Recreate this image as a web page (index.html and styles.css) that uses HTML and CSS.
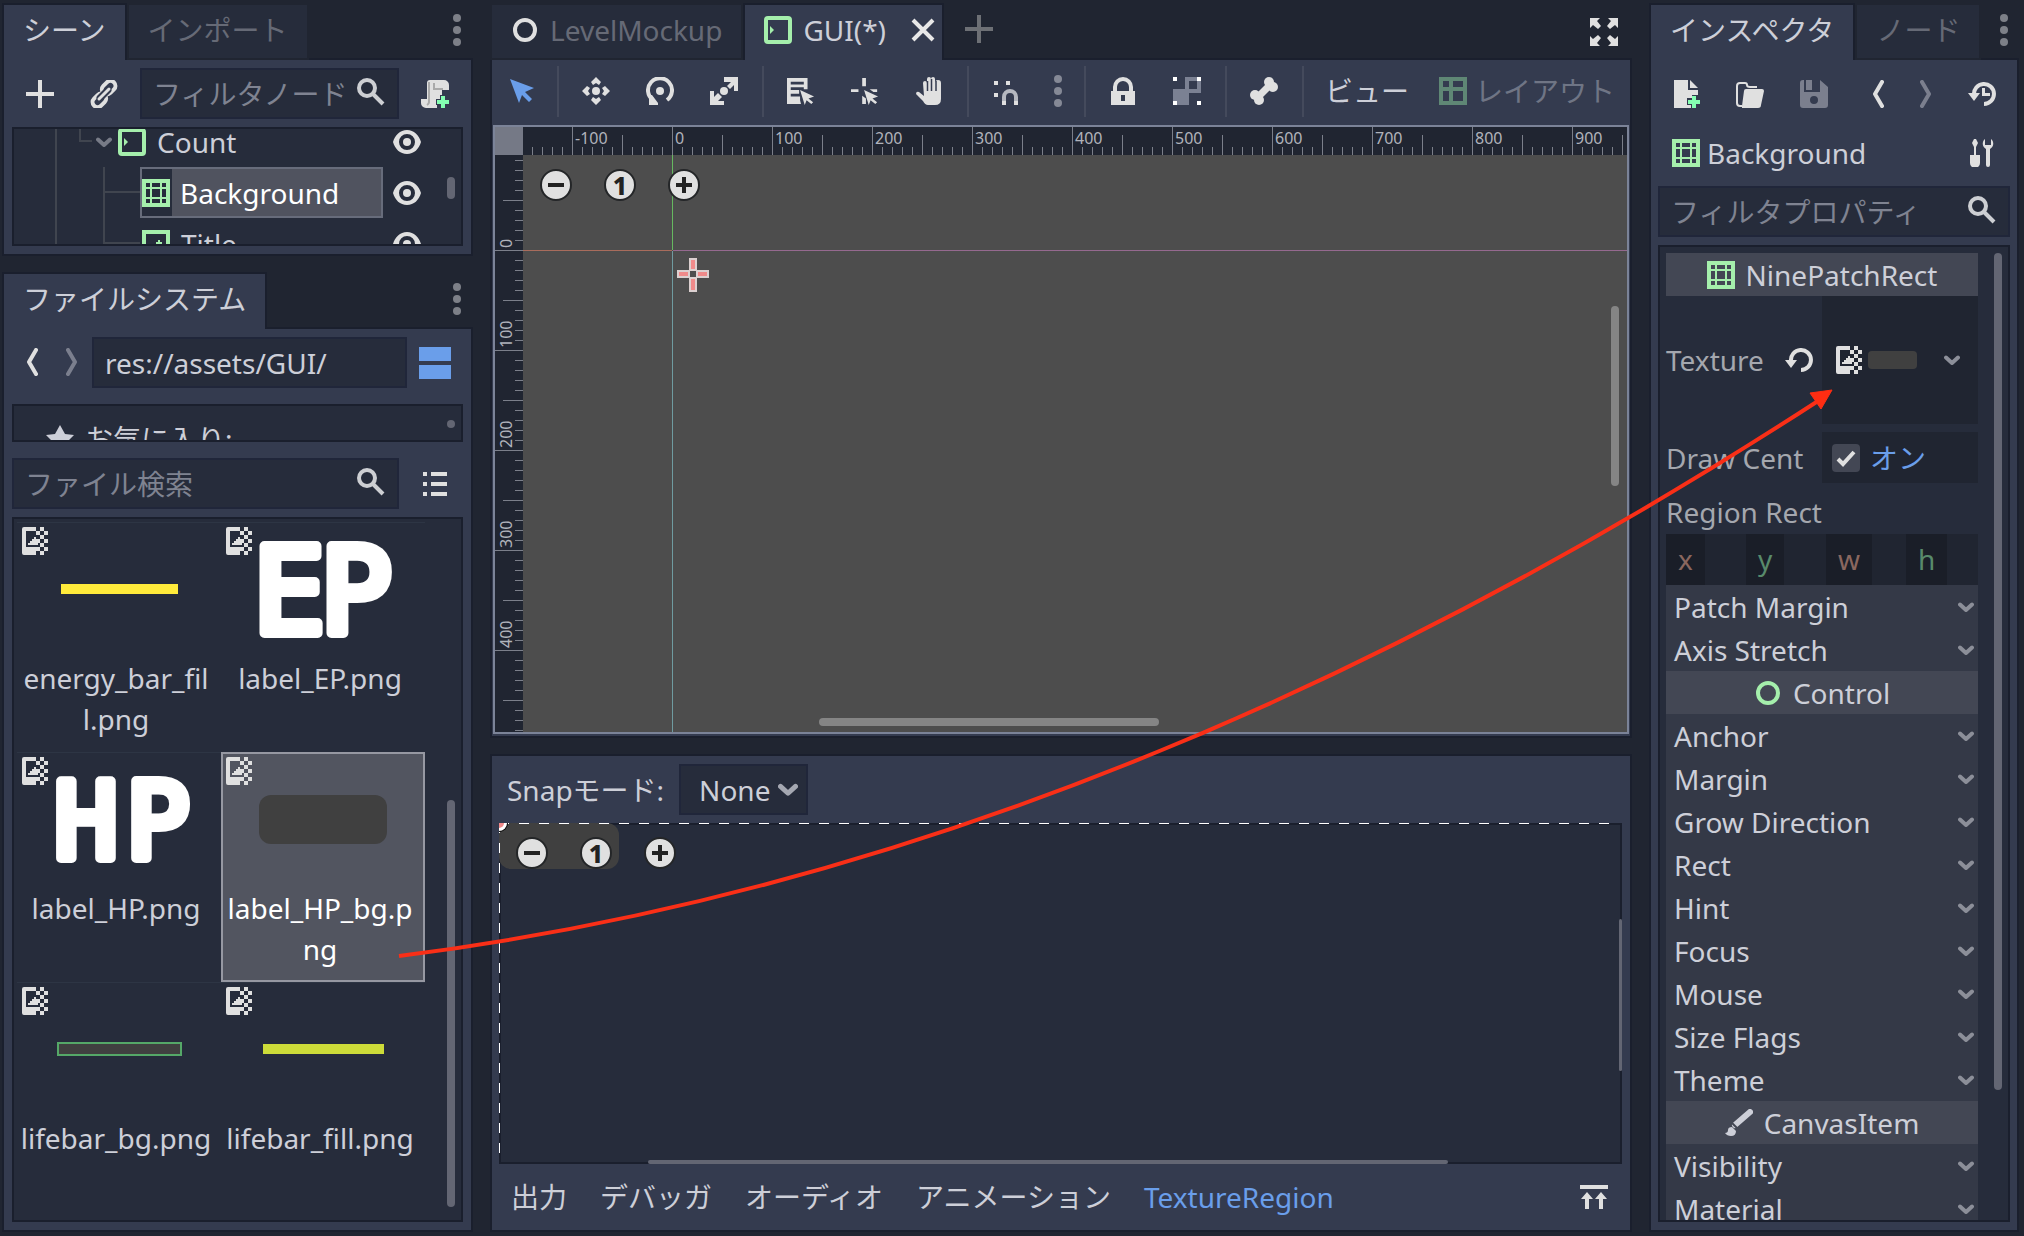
FILE: index.html
```html
<!DOCTYPE html>
<html lang="ja">
<head>
<meta charset="utf-8">
<title>GUI(*)</title>
<link rel="stylesheet" href="styles.css">
</head>
<body>
<svg class="defs" aria-hidden="true">
  <symbol id="i-dots" viewBox="0 0 8 32"><circle cx="4" cy="4" r="4"/><circle cx="4" cy="16" r="4"/><circle cx="4" cy="28" r="4"/></symbol>
  <symbol id="i-plus" viewBox="0 0 14 14"><path d="M6 0h2v6h6v2H8v6H6V8H0V6h6z"/></symbol>
  <symbol id="i-link" viewBox="0 0 28 28"><g fill="none" stroke="currentColor" stroke-width="4"><rect x="11.500" y="2.500" width="15" height="10" rx="5" transform="rotate(-45 19 8)"/><rect x="1.500" y="15.500" width="15" height="10" rx="5" transform="rotate(-45 9 20)"/></g><path d="M10 18 18 10" stroke="#343b4f" stroke-width="7" stroke-linecap="round"/><path d="M9 19 19 9" stroke="currentColor" stroke-width="3" stroke-linecap="round"/></symbol>
  <symbol id="i-search" viewBox="0 0 28 28"><circle cx="10" cy="10" r="8" fill="none" stroke="currentColor" stroke-width="4"/><path d="M16 16 26 26" stroke="currentColor" stroke-width="4"/></symbol>
  <symbol id="i-script" viewBox="0 0 28 28"><path d="M9 0h14a5 5 0 0 1 5 5v5h-7v9h-3v5h-2v4H5a5 5 0 0 1-5-5v-4h6V3a3 3 0 0 1 3-3z"/><path d="M13 3v6h9M8 2v19a4 4 0 0 1-2 4" fill="none" stroke="#aaa" stroke-width="2"/><path d="M19 15h6v4h4v6h-4v4h-6v-4h-4v-6h4z" fill="#343b4f"/><path d="M20 16h4v4h4v4h-4v4h-4v-4h-4v-4h4z" fill="#84ffb1"/></symbol>
  <symbol id="i-eye" viewBox="0 0 28 24"><path fill-rule="evenodd" d="M14 0C7 0 2 5 0 12c2 7 7 12 14 12s12-5 14-12C26 5 21 0 14 0zm0 4a8 8 0 1 1 0 16 8 8 0 0 1 0-16z"/><circle cx="14" cy="12" r="4"/></symbol>
  <symbol id="i-chev" viewBox="0 0 16 10"><path d="M2 2.500 8 8l6-5.500" fill="none" stroke="currentColor" stroke-width="4" stroke-linecap="round" stroke-linejoin="round"/></symbol>
  <symbol id="i-box" viewBox="0 0 28 28"><rect x="2" y="2" width="24" height="24" rx="2" fill="none" stroke="currentColor" stroke-width="4"/><path d="M6 10l4 4-4 4z"/></symbol>
  <symbol id="i-nine" viewBox="0 0 14 14"><path fill-rule="evenodd" d="M0 0h14v14H0zM2 2v2h2V2zM5 2v2h4V2zM10 2v2h2V2zM2 5v4h2V5zM5 5v4h4V5zM10 5v4h2V5zM2 10v2h2v-2zM5 10v2h4v-2zM10 10v2h2v-2z"/></symbol>
  <symbol id="i-texrect" viewBox="0 0 14 14"><path fill-rule="evenodd" d="M0 0h14v14H0zM2 2v10h10V2z"/><path d="M3 10V9h1V8h2V7h1V6h1V5h1v1h1v4z"/></symbol>
  <symbol id="i-img" viewBox="0 0 13 14"><path d="M1 0h6v2H2v8h5v4H1a1 1 0 0 1-1-1V1a1 1 0 0 1 1-1z"/><path d="M3 9V8h1V7h1V6h1V5h1v1h1v3z"/><path d="M9 0h2v2H9zM7 2h2v2H7zM11 2h2v2h-2zM9 4h2v2H9zM11 6h2v2h-2zM9 8h2v2H9zM7 6h2v2H7zM11 10h2v2h-2zM7 10h2v2H7zM9 12h2v2H9z"/></symbol>
  <symbol id="i-prev" viewBox="0 0 12 28"><path d="M10 2 3 14l7 12" fill="none" stroke="currentColor" stroke-width="4" stroke-linecap="round" stroke-linejoin="round"/></symbol>
  <symbol id="i-next" viewBox="0 0 12 28"><path d="M2 2l7 12-7 12" fill="none" stroke="currentColor" stroke-width="4" stroke-linecap="round" stroke-linejoin="round"/></symbol>
  <symbol id="i-split" viewBox="0 0 32 32"><path d="M0 0h32v14H0zM0 18h32v14H0z"/></symbol>
  <symbol id="i-star" viewBox="0 0 28 28"><path d="M14 0l5 9 9 1-7 7 3 10-10-5-10 5 3-10-7-7 9-1z"/></symbol>
  <symbol id="i-list" viewBox="0 0 24 24"><path d="M0 0h4v4H0zM8 0h16v4H8zM0 10h4v4H0zM8 10h16v4H8zM0 20h4v4H0zM8 20h16v4H8z"/></symbol>
  <symbol id="i-ring" viewBox="0 0 28 28"><circle cx="14" cy="14" r="10" fill="none" stroke="currentColor" stroke-width="4"/></symbol>
  <symbol id="i-ring-l" viewBox="0 0 28 28"><circle cx="14" cy="14" r="10" fill="none" stroke="currentColor" stroke-width="4"/></symbol>
  <symbol id="i-close" viewBox="0 0 24 24"><path d="M2 2 22 22M22 2 2 22" stroke="currentColor" stroke-width="4"/></symbol>
  <symbol id="i-full" viewBox="0 0 28 28"><path d="M0 0h10L7 3l4 5-3 3-5-4-3 3zM28 0H18l3 3-4 5 3 3 5-4 3 3zM0 28h10l-3-3 4-5-3-3-5 4-3-3zM28 28H18l3-3-4-5 3-3 5 4 3-3z"/></symbol>
  <symbol id="i-select" viewBox="0 0 28 28"><path d="M2 2l24 9-9 4 7 7-3 3-7-7-3 8z"/></symbol>
  <symbol id="i-move" viewBox="0 0 28 28"><circle cx="14" cy="14" r="4"/><path d="M14 0l5 5-2 3-3-2-3 2-2-3zM14 28l5-5-2-3-3 2-3-2-2 3zM0 14l5-5 3 2-2 3 2 3-3 2zM28 14l-5-5-3 2 2 3-2 3 3 2z"/></symbol>
  <symbol id="i-rotate" viewBox="0 0 28 28"><circle cx="14" cy="14" r="4"/><path d="M7 23A12 12 0 1 1 21 23" fill="none" stroke="currentColor" stroke-width="4"/><path d="M3 28V18h3l6 8v2z"/></symbol>
  <symbol id="i-scale" viewBox="0 0 28 28"><circle cx="14" cy="14" r="4"/><path d="M14 0h14v14h-4V8l-4 4-3-3 4-4h-7zM0 14h4v6l4-4 4 4-4 4h6v4H0z"/></symbol>
  <symbol id="i-lsel" viewBox="0 0 30 28"><path d="M0 0h22v12h-4v-2H4v3h9v4H4v3h10v4l1 4H0zM4 4v3h14V4z" fill-rule="evenodd"/><path d="M14 13l15 7-6 2 5 4-2 2-5-4-2 5z"/></symbol>
  <symbol id="i-pivot" viewBox="0 0 30 28"><path d="M12 0h4v9h-4zM0 12h8v3H0zM20 12h8v3h-4zM12 19l4 3v6h-4z"/><path d="M14 13l15 7-6 2 5 4-2 2-5-4-2 5z"/></symbol>
  <symbol id="i-hand" viewBox="0 0 26 28"><path d="M7 6a2 2 0 0 1 4 0V2a2 2 0 0 1 4 0v0a2 2 0 0 1 4 0v4a2 2 0 0 1 6 0v16q0 6-6 6h-7q-3 0-5-4L0 17q0-3 3-2l5 4z"/><path d="M11.500 4v10M15.500 2v12M20 4v10" stroke="#343b4f" stroke-width="1.500"/></symbol>
  <symbol id="i-snap" viewBox="0 0 28 28"><path d="M2 4h4v4H2zM14 4h4v4h-4zM2 16h4v4H2z"/><path d="M12 24v-4a6 6 0 0 1 12 0v4" fill="none" stroke="#b5b8c0" stroke-width="4"/><path d="M10 24h4v4h-4zM22 24h4v4h-4z"/></symbol>
  <symbol id="i-lock" viewBox="0 0 24 28"><path fill-rule="evenodd" d="M0 14h2V10a10 10 0 0 1 20 0v4h2v14H0zM6 14h12V10a6 6 0 0 0-12 0zM10 18v6h4v-6z"/></symbol>
  <symbol id="i-group" viewBox="0 0 28 28"><path d="M0 12h12V0h16v16H16v12H0zM16 4v8h8V4z" fill="#7b8193" fill-rule="evenodd"/><path d="M0 0h4v4H0zM24 0h4v4h-4zM0 24h4v4H0zM24 24h4v4h-4z" fill="#fff"/></symbol>
  <symbol id="i-bone" viewBox="0 0 28 28"><path d="M8 20 20 8" stroke="currentColor" stroke-width="7"/><circle cx="19" cy="5" r="5"/><circle cx="23" cy="10" r="5"/><circle cx="5" cy="18" r="5"/><circle cx="9" cy="23" r="5"/></symbol>
  <symbol id="i-layout" viewBox="0 0 28 28"><path fill-rule="evenodd" d="M0 0h28v28H0zM4 4v6h6V4zM14 4v6h10V4zM4 14v10h6V14zM14 14v10h10V14z"/></symbol>
  <symbol id="i-minus-c" viewBox="0 0 32 32"><circle cx="16" cy="16" r="15" fill="#e0e0e0" stroke="#242628" stroke-width="2"/><path d="M8 14h16v4H8z" fill="#222"/></symbol>
  <symbol id="i-plus-c" viewBox="0 0 32 32"><circle cx="16" cy="16" r="15" fill="#e0e0e0" stroke="#242628" stroke-width="2"/><path d="M8 14h6V8h4v6h6v4h-6v6h-4v-6H8z" fill="#222"/></symbol>
  <symbol id="i-up" viewBox="0 0 28 24"><path d="M0 0h28v4H0zM7 7l6 7H9v10H5V14H1zM21 7l6 7h-4v10h-4V14h-4z"/></symbol>
  <symbol id="i-new" viewBox="0 0 28 28"><path d="M2 0h14v10h10v5h-6v3h-5v7h4v3H2zM18 0l8 8h-8z"/><path d="M20 16h4v4h4v4h-4v4h-4v-4h-4v-4h4z" fill="#84ffb1"/></symbol>
  <symbol id="i-open" viewBox="0 0 28 28"><path d="M6 26H4a3 3 0 0 1-3-3V6q0-3 3-3h5q2 0 2 2t3 2h7" fill="none" stroke="currentColor" stroke-width="2"/><path d="M10 9h16q2 0 2 2l-3 14q0 3-3 3H6q0 0 0-2l2-15q0-2 2-2z"/></symbol>
  <symbol id="i-save" viewBox="0 0 28 28"><path fill-rule="evenodd" d="M3 0h1v12h16V0l8 7v18a3 3 0 0 1-3 3H3a3 3 0 0 1-3-3V3a3 3 0 0 1 3-3zm11 16a4 4 0 1 0 0 8 4 4 0 0 0 0-8z"/><path d="M6 0h6v10H6z"/></symbol>
  <symbol id="i-hist" viewBox="0 0 28 28"><path d="M6 15A10 10 0 1 1 16 24" fill="none" stroke="currentColor" stroke-width="4"/><path d="M0 13h12l-6 8zM14 8h3v5h5v3h-8z"/></symbol>
  <symbol id="i-tools" viewBox="0 0 24 28"><path d="M4 0h2l2 4-2 4v8h4v8a5 5 0 0 1-10 0v-8h4V8L2 4z"/><path d="M15 0v6h6V0a6 6 0 0 1-1 10v16a2 2 0 0 1-4 0V10a6 6 0 0 1-1-10z"/></symbol>
  <symbol id="i-reload" viewBox="0 0 28 24"><path d="M6 13A10 10 0 1 1 16 22" fill="none" stroke="currentColor" stroke-width="4"/><path d="M0 12h12l-6 8z"/></symbol>
  <symbol id="i-brush" viewBox="0 0 28 28"><path d="M10 16 25 3" stroke="currentColor" stroke-width="6" stroke-linecap="round"/><path d="M0 24q3 0 3-3t4-3l4 4q0 5-5 5-4 0-6-3z"/><path d="M7 14l6 6" stroke="#434754" stroke-width="2"/></symbol>
</svg>

<div class="editor">
  <div class="side">
    <section class="dock scene">
      <div class="tabs"><button class="tab on">シーン</button><button class="tab">インポート</button><span class="fill"></span><button class="dots" aria-label="メニュー"><svg><use href="#i-dots"/></svg></button></div>
      <div class="body">
        <div class="row tools">
          <button class="ic" aria-label="追加"><svg class="s28"><use href="#i-plus"/></svg></button>
          <button class="ic wide" aria-label="リンク"><svg class="s28"><use href="#i-link"/></svg></button>
          <label class="field"><input placeholder="フィルタノード" aria-label="フィルタノード"><svg class="s28"><use href="#i-search"/></svg></label>
          <button class="ic script" aria-label="スクリプト"><svg class="s28"><use href="#i-script"/></svg></button>
        </div>
        <div class="well treewell">
          <ul class="tree">
            <li><svg class="guide g1"><path d="M42 0v51M66 0v25h12"/></svg><svg class="chev"><use href="#i-chev"/></svg><span class="node n1"><svg class="s28 green"><use href="#i-box"/></svg><span>Count</span></span><svg class="eye"><use href="#i-eye"/></svg></li>
            <li><svg class="guide g2"><path d="M42 0v51M90 0v51M90 25h36"/></svg><span class="node sel"><span class="cell"><svg class="s28 green"><use href="#i-nine"/></svg></span><span>Background</span></span><svg class="eye"><use href="#i-eye"/></svg></li>
            <li><svg class="guide g2"><path d="M42 0v51M90 0v51M90 25h36"/></svg><span class="node n3"><svg class="s28 green"><use href="#i-texrect"/></svg><span>Title</span></span><svg class="eye"><use href="#i-eye"/></svg></li>
          </ul>
          <span class="bar bar-tree"></span>
        </div>
      </div>
    </section>

    <section class="dock files">
      <div class="tabs"><button class="tab on">ファイルシステム</button><span class="fill"></span><button class="dots" aria-label="メニュー"><svg><use href="#i-dots"/></svg></button></div>
      <div class="body">
        <div class="row path">
          <button class="ar" aria-label="戻る"><svg class="arrow"><use href="#i-prev"/></svg></button>
          <button class="ar dim" aria-label="進む"><svg class="arrow"><use href="#i-next"/></svg></button>
          <input class="field" value="res://assets/GUI/" aria-label="パス">
          <button class="ic blue" aria-label="分割"><svg class="s32"><use href="#i-split"/></svg></button>
        </div>
        <div class="well fav"><svg class="s28"><use href="#i-star"/></svg><span>お気に入り:</span><span class="bar bar-fav"></span></div>
        <div class="row find">
          <label class="field"><input placeholder="ファイル検索" aria-label="ファイル検索"><svg class="s28"><use href="#i-search"/></svg></label>
          <button class="ic" aria-label="リスト"><svg class="s24"><use href="#i-list"/></svg></button>
        </div>
        <div class="well grid">
          <figure><svg class="badge"><use href="#i-img"/></svg><div class="thumb"><i class="t-energy"></i></div><figcaption>energy_bar_fil<br>l.png</figcaption></figure>
          <figure><svg class="badge"><use href="#i-img"/></svg><div class="thumb"><svg class="word ep"><text x="-6 61" y="93">EP</text></svg></div><figcaption>label_EP.png</figcaption></figure>
          <figure><svg class="badge"><use href="#i-img"/></svg><div class="thumb"><svg class="word hp"><text x="-1 71" y="82">HP</text></svg></div><figcaption>label_HP.png</figcaption></figure>
          <figure class="sel"><svg class="badge"><use href="#i-img"/></svg><div class="thumb"><i class="t-bg"></i></div><figcaption>label_HP_bg.p<br>ng</figcaption></figure>
          <figure><svg class="badge"><use href="#i-img"/></svg><div class="thumb"><i class="t-life"></i></div><figcaption>lifebar_bg.png</figcaption></figure>
          <figure><svg class="badge"><use href="#i-img"/></svg><div class="thumb"><i class="t-fill"></i></div><figcaption>lifebar_fill.png</figcaption></figure>
          <span class="bar bar-grid"></span>
        </div>
      </div>
    </section>
  </div>

  <main class="center">
    <section class="dock stage">
      <div class="tabs">
        <button class="tab doc"><svg class="s28 white"><use href="#i-ring"/></svg>LevelMockup</button>
        <button class="tab doc on"><svg class="s28 green"><use href="#i-box"/></svg>GUI(*)<svg class="s24 close"><use href="#i-close"/></svg></button>
        <button class="addtab" aria-label="追加"><svg class="s28"><use href="#i-plus"/></svg></button>
        <span class="fill"></span>
        <button class="full" aria-label="全画面"><svg class="s28"><use href="#i-full"/></svg></button>
      </div>
      <div class="body">
        <div class="toolbar">
          <button class="first blue" aria-label="選択"><svg class="s28"><use href="#i-select"/></svg></button><hr>
          <button aria-label="移動"><svg class="s28"><use href="#i-move"/></svg></button>
          <button aria-label="回転"><svg class="s28"><use href="#i-rotate"/></svg></button>
          <button aria-label="拡縮"><svg class="s28"><use href="#i-scale"/></svg></button><hr>
          <button aria-label="リスト選択"><svg class="s28"><use href="#i-lsel"/></svg></button>
          <button aria-label="ピボット"><svg class="s28"><use href="#i-pivot"/></svg></button>
          <button aria-label="パン"><svg class="s28"><use href="#i-hand"/></svg></button><hr>
          <button aria-label="スナップ"><svg class="s28"><use href="#i-snap"/></svg></button>
          <button class="more" aria-label="オプション"><svg><use href="#i-dots"/></svg></button><hr>
          <button aria-label="ロック"><svg class="s28"><use href="#i-lock"/></svg></button>
          <button aria-label="グループ"><svg class="s28"><use href="#i-group"/></svg></button><hr>
          <button aria-label="ボーン"><svg class="s28"><use href="#i-bone"/></svg></button><hr>
          <button class="view">ビュー</button>
          <button class="layout"><svg class="s28"><use href="#i-layout"/></svg>レイアウト</button>
        </div>
        <div class="viewport">
          <svg class="canvas">
            <defs>
              <pattern id="tx" x="177" y="0" width="100" height="28" patternUnits="userSpaceOnUse"><path d="M.5 0v28M50.500 8v20M10.500 20v8M20.500 20v8M30.500 20v8M40.500 20v8M60.500 20v8M70.500 20v8M80.500 20v8M90.500 20v8" stroke="#7b7f8a"/></pattern>
              <pattern id="ty" x="0" y="123" width="28" height="100" patternUnits="userSpaceOnUse"><path d="M0 .5h28M8 50.500h20M20 10.500h8M20 20.500h8M20 30.500h8M20 40.500h8M20 60.500h8M20 70.500h8M20 80.500h8M20 90.500h8" stroke="#7b7f8a"/></pattern>
            </defs>
            <rect width="100%" height="100%" fill="#4d4d4d"/>
            <path d="M177.500 28v95" stroke="#66b860"/>
            <rect x="177" y="124" width="1" height="100%" fill="#6f9ba0"/>
            <path d="M28 123.500h149" stroke="#a96c5c"/>
            <rect x="178" y="123" width="100%" height="1" fill="#95698f"/>
            <rect width="100%" height="28" fill="#202531"/><rect width="28" height="100%" fill="#202531"/>
            <rect x="28" width="100%" height="28" fill="url(#tx)"/><rect y="28" width="28" height="100%" fill="url(#ty)"/>
            <rect width="28" height="28" fill="#757986"/>
            <g class="num"><text x="80" y="17">-100</text><text x="180" y="17">0</text><text x="280" y="17">100</text><text x="380" y="17">200</text><text x="480" y="17">300</text><text x="580" y="17">400</text><text x="680" y="17">500</text><text x="780" y="17">600</text><text x="880" y="17">700</text><text x="980" y="17">800</text><text x="1080" y="17">900</text>
            <text transform="translate(17 121) rotate(-90)">0</text><text transform="translate(17 221) rotate(-90)">100</text><text transform="translate(17 321) rotate(-90)">200</text><text transform="translate(17 421) rotate(-90)">300</text><text transform="translate(17 521) rotate(-90)">400</text></g>
            <g fill="#f08a8a" stroke="#dcd0d0" stroke-width="2"><path d="M195 132h6v11h-6zM195 151h6v13h-6zM183 144h11v6h-11zM202 144h11v6h-11z"/></g>
          </svg>
          <div class="zoom zoom-main"><button aria-label="縮小"><svg><use href="#i-minus-c"/></svg></button><button class="one">1</button><button aria-label="拡大"><svg><use href="#i-plus-c"/></svg></button></div>
          <span class="bar bar-v"></span><span class="bar bar-h"></span>
        </div>
      </div>
    </section>

    <section class="dock bottom">
      <div class="snap"><label for="snap">Snapモード:</label><span class="pick"><select id="snap"><option>None</option></select><svg class="chev big"><use href="#i-chev"/></svg></span></div>
      <div class="well region">
        <svg class="dash"><rect width="120" height="46" rx="12" fill="#404040"/><path d="M0 .5H1112" stroke="#fff" stroke-dasharray="10 10"/><path d="M.5 0V340" stroke="#fff" stroke-dasharray="10 10"/><circle r="9" fill="#000"/><circle r="8" fill="#fff"/><circle r="5" fill="#f08a8a"/></svg>
        <div class="zoom zoom-sub"><button aria-label="縮小"><svg><use href="#i-minus-c"/></svg></button><button class="one">1</button><button aria-label="拡大"><svg><use href="#i-plus-c"/></svg></button></div>
        <span class="bar bar-rv"></span><span class="bar bar-rh"></span>
      </div>
      <nav class="panels"><button>出力</button><button>デバッガ</button><button>オーディオ</button><button>アニメーション</button><button class="blue">TextureRegion</button><span class="fill"></span><button aria-label="展開"><svg class="up"><use href="#i-up"/></svg></button></nav>
    </section>
  </main>

  <section class="dock inspector">
    <div class="tabs"><button class="tab on">インスペクタ</button><button class="tab">ノード</button><span class="fill"></span><button class="dots" aria-label="メニュー"><svg><use href="#i-dots"/></svg></button></div>
    <div class="body">
      <div class="row res">
        <button aria-label="新規"><svg class="s28"><use href="#i-new"/></svg></button>
        <button aria-label="開く"><svg class="s28"><use href="#i-open"/></svg></button>
        <button class="dim" aria-label="保存"><svg class="s28"><use href="#i-save"/></svg></button>
        <button class="prev" aria-label="前"><svg class="arrow"><use href="#i-prev"/></svg></button>
        <button class="dim" aria-label="次"><svg class="arrow"><use href="#i-next"/></svg></button>
        <button aria-label="履歴"><svg class="s28"><use href="#i-hist"/></svg></button>
      </div>
      <div class="row obj"><svg class="s28 green"><use href="#i-nine"/></svg><span>Background</span><span class="fill"></span><button aria-label="ツール"><svg class="toolic"><use href="#i-tools"/></svg></button></div>
      <label class="field prop"><input placeholder="フィルタプロパティ" aria-label="フィルタプロパティ"><svg class="s28"><use href="#i-search"/></svg></label>
      <div class="well props">
        <div class="list">
          <h2><svg class="s28 green"><use href="#i-nine"/></svg>NinePatchRect</h2>
          <div class="p texture"><span class="name">Texture</span><button class="reload" aria-label="リセット"><svg class="rel"><use href="#i-reload"/></svg></button><button class="val" aria-label="Texture"><svg class="badge"><use href="#i-img"/></svg><i class="swatch"></i><span class="fill"></span><svg class="chev"><use href="#i-chev"/></svg></button></div>
          <div class="p draw"><label class="name" for="dc">Draw Cent</label><span class="val"><span class="check"><input type="checkbox" id="dc" checked><svg viewBox="0 0 28 28"><path d="M6 15l5 5L22 8" fill="none" stroke="#e0e0e0" stroke-width="4"/></svg></span><span class="blue">オン</span></span></div>
          <div class="name rr">Region Rect</div>
          <div class="vec"><label><span class="r">x</span><input aria-label="x"></label><label><span class="g">y</span><input aria-label="y"></label><label><span class="r">w</span><input aria-label="w"></label><label><span class="g">h</span><input aria-label="h"></label></div>
          <button class="sec">Patch Margin<svg class="chev"><use href="#i-chev"/></svg></button>
          <button class="sec">Axis Stretch<svg class="chev"><use href="#i-chev"/></svg></button>
          <h2><svg class="s28 green"><use href="#i-ring-l"/></svg>Control</h2>
          <button class="sec">Anchor<svg class="chev"><use href="#i-chev"/></svg></button>
          <button class="sec">Margin<svg class="chev"><use href="#i-chev"/></svg></button>
          <button class="sec">Grow Direction<svg class="chev"><use href="#i-chev"/></svg></button>
          <button class="sec">Rect<svg class="chev"><use href="#i-chev"/></svg></button>
          <button class="sec">Hint<svg class="chev"><use href="#i-chev"/></svg></button>
          <button class="sec">Focus<svg class="chev"><use href="#i-chev"/></svg></button>
          <button class="sec">Mouse<svg class="chev"><use href="#i-chev"/></svg></button>
          <button class="sec">Size Flags<svg class="chev"><use href="#i-chev"/></svg></button>
          <button class="sec">Theme<svg class="chev"><use href="#i-chev"/></svg></button>
          <h2><svg class="s28"><use href="#i-brush"/></svg>CanvasItem</h2>
          <button class="sec">Visibility<svg class="chev"><use href="#i-chev"/></svg></button>
          <button class="sec">Material<svg class="chev"><use href="#i-chev"/></svg></button>
        </div>
        <span class="bar bar-props"></span>
      </div>
    </div>
  </section>
</div>
<svg class="arrow-note" aria-hidden="true"><path d="M399 956Q1100 868 1818 401" fill="none" stroke="#f92f17" stroke-width="4"/><path d="M1832 390l-22 3 11 16z" fill="#ff2d12" stroke="#ff2d12" stroke-width="1"/></svg>
</body>
</html>
```
FILE: styles.css
```css
* { box-sizing: border-box; }
body {
  margin: 0;
  position: relative;
  background: #202531;
  color: #cdcfd8;
  font: 28px/40px "Noto Sans", "Noto Sans CJK JP", sans-serif;
  overflow: hidden;
}
button, input, select { font: inherit; color: inherit; background: none; border: 0; padding: 0; margin: 0; outline: 0; }
button { display: flex; align-items: center; justify-content: center; color: #e0e0e0; }
svg { display: block; flex: none; fill: currentColor; }
ul, h2, figure { margin: 0; padding: 0; list-style: none; font-weight: 400; font-size: 28px; }
i { display: block; }
.defs { position: absolute; width: 0; height: 0; }
.fill { flex: 1; }
.s28 { width: 28px; height: 28px; }
.s24 { width: 24px; height: 24px; }
.s32 { width: 32px; height: 32px; }
.arrow { width: 12px; height: 28px; }
.chev { width: 16px; height: 10px; color: #8c8f99; }
.badge { width: 26px; height: 28px; color: #e0e0e0; }
.green { color: #a5efac; }
.white { color: #e0e0e0; }
.blue, button.blue { color: #6a9eea; }
button.dim { color: #7b7f8e; }

.editor {
  display: grid;
  grid-template-columns: 471px minmax(0, 1fr) 370px;
  gap: 17px;
  height: 100vh;
  padding: 3px 5px 4px 2px;
}
.side, .center { display: flex; flex-direction: column; gap: 16px; min-height: 0; }
.dock { display: flex; flex-direction: column; min-height: 0; }
.body {
  flex: 1;
  min-height: 0;
  display: flex;
  flex-direction: column;
  background: #343b4f;
  border: 2px solid #1a1f2d;
  border-top: 0;
  padding: 8px;
}
.tabs { display: flex; height: 57px; box-shadow: inset 0 -2px #1a1f2d; }
.tab {
  height: 57px;
  padding: 0 19px 4px;
  border: 2px solid #202531;
  background: #262c3b;
  color: #666a76;
}
.tab.on { background: #343b4f; border-color: #1a1f2d; border-bottom: 0; color: #cdcfd8; padding-bottom: 6px; }
.dots { width: 32px; color: #7d8088; padding-bottom: 3px; }
.dots svg, .more svg { width: 8px; height: 32px; }

.field {
  display: flex;
  align-items: center;
  height: 51px;
  background: #262c3b;
  border: 2px solid #20263a;
  padding: 0 12px 0 11px;
  min-width: 0;
  flex: 1;
}
.field input { flex: 1; width: 0; min-width: 0; }
.field svg { color: #cdcfd3; margin-bottom: 3px; }
input::placeholder { color: #7f8391; opacity: 1; }
.well { position: relative; background: #262c3b; border: 2px solid #1a1f2d; overflow: hidden; }
.row { display: flex; align-items: center; }
.bar { position: absolute; width: 8px; border-radius: 4px; background: #636673; }

.scene { height: 253px; }
.tools .ic { width: 56px; }
.tools .wide { width: 72px; }
.tools .script { width: 64px; padding-left: 8px; }
.treewell { flex: 1; margin-top: 8px; }
.tree { margin-top: -13px; }
.tree li { display: flex; align-items: center; height: 51px; }
.guide { height: 51px; fill: none; stroke: #40454f; stroke-width: 2; }
.g1 { width: 82px; }
.g2 { width: 126px; }
.node { display: flex; align-items: center; height: 51px; gap: 11px; width: 243px; }
.n1 { width: 271px; padding-left: 6px; }
.tree .chev { width: 16px; color: #777b87; }
.n3 { padding-left: 2px; }
.sel.node { background: #50535f; border: 2px solid #676c7b; color: #fff; gap: 8px; }
.cell { width: 30px; height: 47px; background: #262c3b; display: flex; align-items: center; }
.eye { width: 28px; height: 24px; margin-left: 10px; color: #e0e0e0; }
.bar-tree { right: 6px; top: 48px; height: 22px; }

.files { flex: 1; }
.ar { width: 40px; padding-bottom: 2px; }
.path .ic, .find .ic { width: 56px; height: 51px; }
.fav { height: 38px; margin-top: 16px; padding: 19px 0 0 32px; display: flex; gap: 11px; line-height: 28px; }
.bar-fav { right: 6px; top: 14px; height: 8px; }
.find { margin-top: 16px; }
.find .ic { width: 64px; padding-left: 8px; }
.grid {
  flex: 1;
  margin-top: 8px;
  padding: 3px;
  display: grid;
  grid-template-columns: 204px 204px;
  grid-template-rows: 230px 230px 230px;
}
figure { position: relative; border-top: 1px solid #2d3544; padding: 2px 6px 0 0; text-align: center; line-height: 41px; white-space: nowrap; }
figure.sel { background: #525560; border: 2px solid #9698a2; color: #fff; padding: 1px 6px 0 0; }
figure .badge { position: absolute; left: 5px; top: 4px; }
figure.sel .badge { left: 3px; top: 3px; }
.thumb { display: flex; align-items: center; justify-content: center; height: 128px; width: 204px; margin-bottom: 5px; }
figure.sel .thumb { width: 200px; }
.word { width: 128px; overflow: visible; fill: #fff; stroke: #fff; stroke-width: 10px; stroke-linejoin: round; font-family: "DejaVu Sans Mono", monospace; }
.ep { height: 98px; font-size: 120px; }
.hp { height: 87px; font-size: 106px; }
.t-energy { width: 117px; height: 10px; background: #ffeb3b; }
.t-bg { width: 128px; height: 49px; border-radius: 12px; background: #404040; }
.t-life { width: 125px; height: 14px; border: 2px solid #55a868; background: #404040; }
.t-fill { width: 121px; height: 10px; background: #cddc39; }
.bar-grid { right: 6px; top: 281px; height: 407px; }

.stage { flex: 1; }
.stage .body { padding: 0 1px 2px; }
.tab.doc { gap: 11px; }
.tab.doc.on svg.close { margin: 0 -12px 0 14px; color: #e8e8e8; }
.addtab { width: 70px; color: #6d7075; padding-bottom: 6px; }
.full { width: 56px; }
.toolbar { display: flex; align-items: center; height: 65px; padding-bottom: 3px; }
.toolbar button { width: 64px; height: 60px; flex: none; }
.toolbar .first { width: 58px; }
.toolbar .more { width: 40px; color: #858996; }
.toolbar hr { width: 2px; height: 51px; margin: 0 5px 0 6px; border: 0; background: #444a5c; flex: none; }
.toolbar .view { width: 116px; color: #cdcfd8; }
.toolbar .layout { flex: 1; gap: 8px; color: #6f7585; }
.toolbar .layout svg { color: #5f8775; }
.viewport { position: relative; flex: 1; border: 2px solid #7b8398; overflow: hidden; }
.canvas { position: absolute; inset: 0; width: 100%; height: 100%; }
.num { font-size: 16px; fill: #b0b3bb; }
.zoom { position: absolute; display: flex; gap: 32px; }
.zoom svg { width: 32px; height: 32px; }
.zoom .one { width: 32px; height: 32px; border-radius: 16px; border: 2px solid #242628; background: #e0e0e0; color: #222; font-weight: 800; font-size: 25px; line-height: 28px; }
.zoom-main { left: 45px; top: 42px; }
.bar-v { right: 8px; top: 179px; height: 180px; background: #858585; }
.bar-h { left: 324px; bottom: 6px; width: 340px; height: 8px; background: #858585; }

.bottom { height: 478px; background: #343b4f; border: 2px solid #1a1f2d; padding: 8px 8px 0 7px; }
.snap { display: flex; align-items: center; gap: 15px; padding-left: 8px; }
.pick { display: grid; width: 129px; height: 51px; background: #262c3b; border: 2px solid #20263a; }
.pick > * { grid-area: 1 / 1; }
.pick select { appearance: none; padding-left: 18px; }
.chev.big { width: 20px; height: 13px; justify-self: end; align-self: center; margin-right: 8px; color: #a4a7b1; pointer-events: none; }
.region { height: 341px; margin-top: 8px; overflow: visible; }
.dash { position: absolute; left: -2px; top: -2px; width: 1122px; height: 341px; }
.zoom-sub { left: 15px; top: 12px; }
.bar-rv { right: -2px; top: 94px; width: 3px; height: 152px; border-radius: 2px; }
.bar-rh { left: 147px; bottom: -2px; width: 800px; height: 4px; border-radius: 2px; }
.panels { display: flex; flex: 1; align-items: center; gap: 33px; padding: 0 14px 0 12px; }
.panels button { color: #cdcfd8; }
.panels button.blue { color: #6a9eea; }
.up { width: 28px; height: 24px; color: #e0e0e0; }

.inspector .body { padding: 8px 7px; }
.inspector .dots { width: 30px; }
.res { height: 51px; padding: 0 14px; gap: 36px; }
.res .prev { margin-left: 8px; }
.obj { height: 51px; margin-top: 8px; padding: 0 16px 0 14px; gap: 7px; }
.toolic { width: 24px; height: 28px; }
.prop { flex: none; margin-top: 8px; }
.props { flex: 1; margin-top: 8px; padding: 6px; }
.list { width: 312px; }
.list h2 { display: flex; align-items: center; justify-content: center; gap: 11px; height: 43px; background: #434754; color: #cdcfd8; }
.name { color: #a4a7ae; }
.p { display: flex; align-items: center; }
.texture { height: 128px; }
.p .name { flex: 1; white-space: nowrap; }
.reload { width: 46px; }
.rel { width: 28px; height: 24px; }
.val { display: flex; align-items: center; width: 156px; height: 100%; background: #202531; padding: 0 18px 0 14px; gap: 6px; }
.swatch { width: 49px; height: 18px; border-radius: 4px; background: #404040; }
.draw { height: 51px; margin-top: 8px; }
.draw .val { padding-left: 10px; gap: 10px; }
.check { display: grid; width: 28px; height: 28px; }
.check > * { grid-area: 1 / 1; width: 28px; height: 28px; }
.check input { appearance: none; background: #434754; border-radius: 4px; }
.check svg { pointer-events: none; }
.rr { height: 51px; line-height: 58px; }
.vec { display: grid; grid-template-columns: 80px 80px 80px 1fr; height: 51px; background: #202531; }
.vec label { display: flex; min-width: 0; }
.vec span { padding: 0 12px; line-height: 51px; background: #1a1e28; }
.vec input { width: 0; flex: 1; }
.r { color: #8a675f; }
.g { color: #588a6b; }
.sec { width: 100%; height: 43px; padding: 0 4px 0 8px; justify-content: space-between; background: #343947; color: #cdcfd8; }
.bar-props { right: 6px; top: 6px; height: 837px; }

.arrow-note { position: absolute; left: 0; top: 0; width: 100%; height: 100%; pointer-events: none; }
```
